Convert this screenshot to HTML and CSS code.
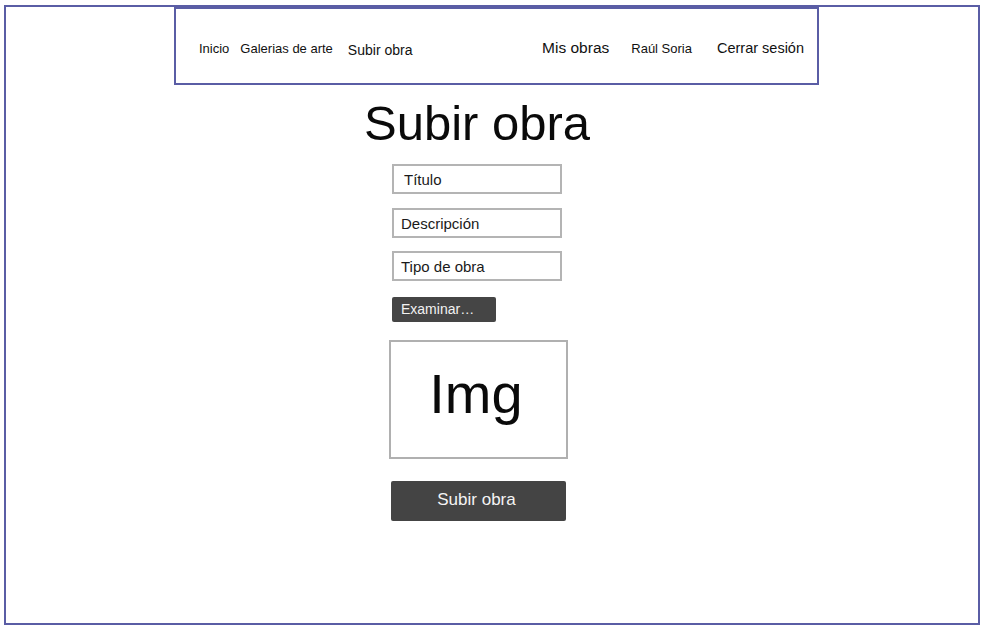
FILE: index.html
```html
<!DOCTYPE html>
<html lang="es">
<head>
<meta charset="utf-8">
<title>Subir obra</title>
<link rel="stylesheet" href="styles.css">
</head>
<body>
<div class="frame">
  <nav class="nav">
    <div class="nav-left">
      <a class="nav-link s13">Inicio</a>
      <a class="nav-link s13 gap11">Galerias de arte</a>
      <a class="nav-link s14 gap15 low">Subir obra</a>
    </div>
    <div class="nav-right">
      <a class="nav-link s155">Mis obras</a>
      <a class="nav-link s13 gap22">Raúl Soria</a>
      <a class="nav-link s145 gap25">Cerrar sesión</a>
    </div>
  </nav>
  <main class="main">
    <h1 class="title">Subir obra</h1>
    <div class="field field-first"><span class="field-label label-titulo">Título</span></div>
    <div class="field field-gap14"><span class="field-label">Descripción</span></div>
    <div class="field field-gap13"><span class="field-label">Tipo de obra</span></div>
    <button class="browse">Examinar…</button>
    <div class="img-box">Img</div>
    <button class="submit">Subir obra</button>
  </main>
</div>
</body>
</html>
```
FILE: styles.css
```css
* { box-sizing: border-box; }
html, body { margin: 0; padding: 0; background: #ffffff; }
body { font-family: "Liberation Sans", Arial, sans-serif; color: #111; }

.frame {
  margin: 5px 0 0 4px;
  width: 976px;
  height: 620px;
  border: 2px solid #5a5da5;
}

.nav {
  margin-left: 168px;
  width: 645px;
  height: 78px;
  border: 2px solid #5a5da5;
  display: flex;
  align-items: center;
  justify-content: space-between;
  padding: 3px 13px 0 23px;
}
.nav-left, .nav-right { display: flex; align-items: baseline; }
.nav-link { color: #111; text-decoration: none; white-space: nowrap; }
.s13 { font-size: 13px; }
.s14 { font-size: 14px; }
.s145 { font-size: 14.5px; }
.s155 { font-size: 15.5px; }
.low { position: relative; top: 2px; }
.gap11 { margin-left: 11px; }
.gap15 { margin-left: 15px; }
.gap22 { margin-left: 22px; }
.gap25 { margin-left: 25px; }

.main {
  margin-left: 351px;
  width: 240px;
  display: flex;
  flex-direction: column;
  align-items: flex-start;
}
.title {
  align-self: stretch;
  margin: 10px 0 0 0;
  font-size: 49px;
  line-height: 56px;
  font-weight: normal;
  text-align: center;
  color: #0a0a0a;
}

.field {
  margin-left: 35px;
  width: 170px;
  height: 30px;
  border: 2px solid #b4b4b4;
  display: flex;
  align-items: center;
  padding: 0 0 0 7px;
  font-size: 15px;
  color: #1a1a1a;
}
.label-titulo { margin-left: 3px; }
.field-first { margin-top: 13px; }
.field-gap14 { margin-top: 14px; }
.field-gap13 { margin-top: 13px; }

.browse {
  margin: 16px 0 0 35px;
  width: 104px;
  height: 25px;
  background: #454545;
  color: #f2f2f2;
  border: none;
  border-radius: 2px;
  font-family: "Liberation Sans", Arial, sans-serif;
  font-size: 14px;
  text-align: left;
  padding: 0 0 2px 9px;
}

.img-box {
  margin: 18px 0 0 32px;
  width: 179px;
  height: 119px;
  border: 2px solid #b0b0b0;
  display: flex;
  align-items: center;
  justify-content: center;
  font-size: 56px;
  color: #0a0a0a;
  padding: 0 5px 12px 0;
}

.submit {
  margin: 22px 0 0 34px;
  width: 175px;
  height: 40px;
  background: #444444;
  color: #f4f4f4;
  border: none;
  border-radius: 2px;
  font-family: "Liberation Sans", Arial, sans-serif;
  font-size: 17px;
  padding: 0 4px 2px 0;
}
```
